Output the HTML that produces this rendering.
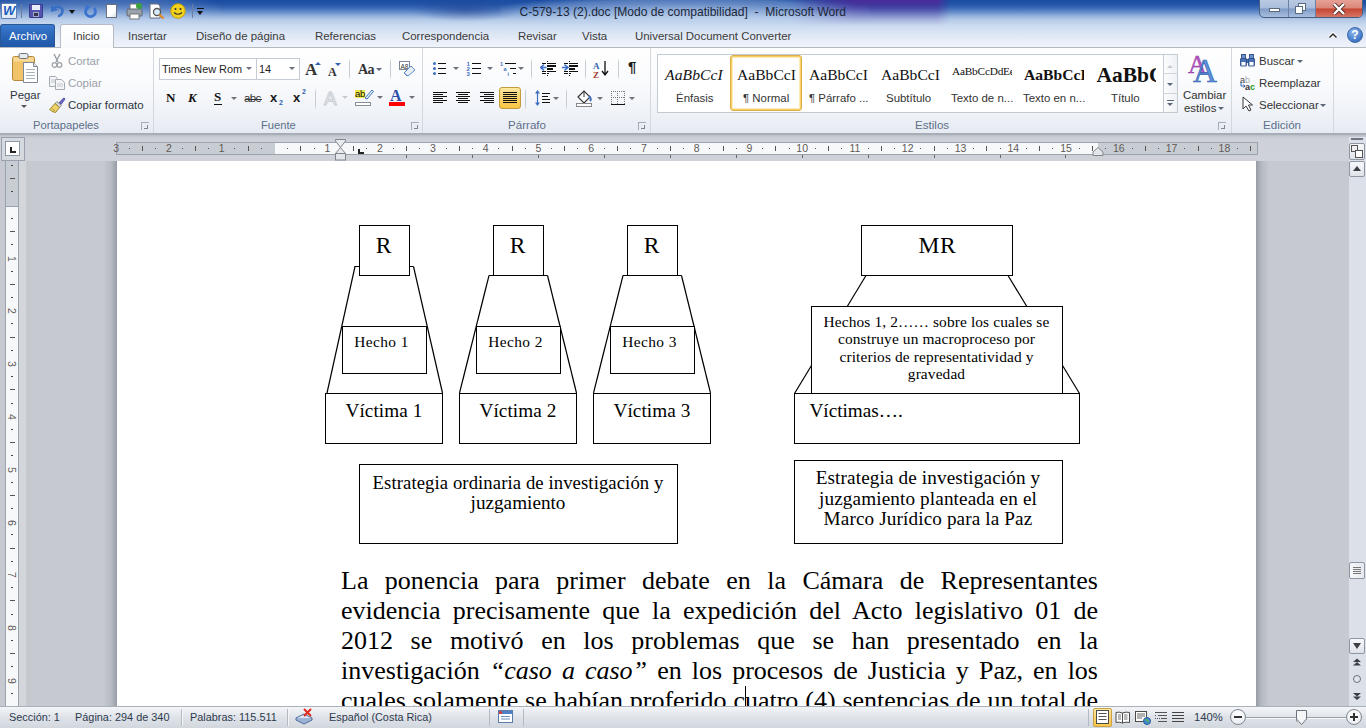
<!DOCTYPE html>
<html><head><meta charset="utf-8">
<style>
*{margin:0;padding:0;box-sizing:border-box}
html,body{width:1366px;height:728px;overflow:hidden;background:#c6c9cf;font-family:"Liberation Sans",sans-serif;font-size:11.45px;color:#1e395b;position:relative}
.a{position:absolute}
.t{position:absolute;white-space:nowrap;line-height:14px}
#title{left:0;top:0;width:1366px;height:47px;background:linear-gradient(#1a4ca2 0px,#2253a6 4px,#3a69b5 8px,#658cc9 12px,#93b1dc 16px,#b5cbe9 20px,#c9d9ef 25px,#d9e4f3 32px,#e7edf8 40px,#eef2fa 46px)}
#ribbon{left:0;top:48px;width:1366px;height:86px;background:linear-gradient(#fefefe 0,#fafbfd 40%,#f0f3f8 75%,#e6ebf2 100%);border-bottom:1px solid #a5adb8}
.sep{position:absolute;width:1px;background:linear-gradient(rgba(200,206,214,0),#c6ccd4 20%,#c6ccd4 80%,rgba(200,206,214,0))}
.gsep{position:absolute;top:48px;height:85px;width:1px;background:#d3d8df}
.glabel{position:absolute;top:118px;white-space:nowrap;color:#5d6f8a;line-height:14px}
.launch{position:absolute;top:122px;width:8px;height:8px;border:1px solid #a3acb8;border-right:none;border-bottom:none}
.dd{position:absolute;width:0;height:0;border-left:3px solid transparent;border-right:3px solid transparent;border-top:3px solid #5b6677}
.serif{font-family:"Liberation Serif",serif;color:#000}
.box{position:absolute;border:1px solid #000;background:#fff}
</style></head><body>
<!-- TITLE BAR + TABS -->
<div id="title" class="a"></div>
<div class="a" style="left:-30px;top:-8px;width:250px;height:36px;background:radial-gradient(ellipse at center,rgba(215,228,245,.3) 0%,rgba(200,218,240,.15) 55%,rgba(200,218,240,0) 75%)"></div>
<div class="a" style="left:410px;top:-2px;width:110px;height:24px;background:radial-gradient(ellipse at center,rgba(25,60,140,.5) 0%,rgba(25,60,140,0) 70%)"></div>
<div class="a" style="left:500px;top:-4px;width:370px;height:30px;background:radial-gradient(ellipse at center,rgba(215,228,245,.55) 0%,rgba(200,218,240,.3) 55%,rgba(200,218,240,0) 75%)"></div>
<div class="a" style="left:790px;top:0;width:160px;height:28px;background:linear-gradient(rgba(85,35,150,.8) 0,rgba(85,35,150,.55) 6px,rgba(85,35,150,.3) 13px,rgba(85,35,150,0) 26px);-webkit-mask-image:linear-gradient(90deg,transparent 0,#000 40%,#000 92%,transparent 100%)"></div>
<div class="t" style="left:519.5px;top:5px;font-size:12.05px;color:#1b2739">C-579-13 (2).doc [Modo de compatibilidad]&nbsp; -&nbsp; Microsoft Word</div>

<!-- window controls -->
<div class="a" style="left:1259px;top:-2px;width:104px;height:20px;border:1px solid #4a5d7a;border-radius:0 0 5px 5px;overflow:hidden;background:linear-gradient(#bccbe3,#a9bddb 50%,#7f9bc6 55%,#a8bedf)"></div>
<div class="a" style="left:1288px;top:0;width:1px;height:17px;background:#6b82a6"></div>
<div class="a" style="left:1315px;top:0;width:1px;height:17px;background:#6b82a6"></div>
<div class="a" style="left:1316px;top:-1px;width:46px;height:18px;border-radius:0 0 4px 0;background:linear-gradient(#e8a49a,#d98677 50%,#c54631 55%,#d77566)"></div>
<div class="a" style="left:1269px;top:8px;width:11px;height:4px;background:#fff;border:1px solid #5a6a80"></div>
<div class="a" style="left:1298px;top:3px;width:8px;height:8px;border:1px solid #5a6a80;background:#f2f4f8;box-shadow:inset 0 0 0 1.5px #fff"></div>
<div class="a" style="left:1295px;top:6px;width:8px;height:8px;border:1px solid #5a6a80;background:#fff;box-shadow:inset 0 0 0 2px #fff"></div>
<svg class="a" style="left:1332px;top:3px" width="14" height="12" viewBox="0 0 14 12"><path d="M2 1 L12 11 M12 1 L2 11" stroke="#4b2a26" stroke-width="4"/><path d="M2 1 L12 11 M12 1 L2 11" stroke="#fff" stroke-width="2.4"/></svg>

<!-- ribbon minimize + help -->
<svg class="a" style="left:1328px;top:31px" width="10" height="8"><path d="M1.5 6.5 L5 3 L8.5 6.5" stroke="#fff" stroke-width="3.5" fill="none"/><path d="M1.5 6.5 L5 3 L8.5 6.5" stroke="#2b2b2b" stroke-width="1.5" fill="none"/></svg>
<div class="a" style="left:1347px;top:27px;width:16px;height:16px;border-radius:50%;background:radial-gradient(circle at 40% 30%,#8fb7ec,#3f77c8 70%,#2f62b0);border:1px solid #3c68a8;color:#fff;font-weight:bold;font-size:12px;line-height:14px;text-align:center">?</div>

<!-- QAT -->
<div class="a" style="left:1px;top:3px;width:16px;height:16px;background:linear-gradient(#fdfdfe,#dfe8f4);border:1px solid #5b7fb3;border-radius:1px"></div>
<div class="t" style="left:3px;top:4px;font-weight:bold;font-size:13px;color:#1d5fbf;font-style:italic;letter-spacing:-1px">W</div>
<div class="a" style="left:21px;top:4px;width:1px;height:14px;background:#6c7f9c"></div>
<div class="a" style="left:29px;top:4px;width:14px;height:14px;background:#5553b0;border-radius:1px;border:1px solid #3b3b8b"></div>
<div class="a" style="left:32px;top:5px;width:8px;height:5px;background:#e8ecf6"></div>
<div class="a" style="left:33px;top:12px;width:6px;height:5px;background:#343450;border:1px solid #9ea6c9"></div>
<svg class="a" style="left:50px;top:4px" width="16" height="14"><path d="M4 4 C9 1 14 4 12 9 C11 11 9 12 8 12" stroke="#3a6fc6" stroke-width="2.6" fill="none"/><path d="M1 1 L1 8 L8 6 Z" fill="#3a6fc6"/></svg>
<div class="dd" style="left:69px;top:10px;border-top-color:#111;border-left-width:3.5px;border-right-width:3.5px;border-top-width:4px"></div>
<svg class="a" style="left:83px;top:4px" width="15" height="15"><path d="M11 4 A5 5 0 1 1 4 4" stroke="#3c74d0" stroke-width="2.8" fill="none"/><path d="M2 1 L8 2 L3 8 Z" fill="#3c74d0"/></svg>
<div class="a" style="left:106px;top:4px;width:11px;height:14px;background:linear-gradient(135deg,#fff 60%,#d8dde6);border:1px solid #6a7080"></div>
<svg class="a" style="left:126px;top:3px" width="17" height="17"><rect x="4" y="1" width="9" height="6" fill="#fff" stroke="#777"/><rect x="1" y="6" width="15" height="7" rx="1" fill="#9aa2ac" stroke="#5f6670"/><rect x="4" y="11" width="9" height="5" fill="#fff" stroke="#777"/><circle cx="13" cy="3" r="3" fill="#3aa03a"/></svg>
<svg class="a" style="left:148px;top:3px" width="17" height="17"><path d="M2 1 H10 L12 3 V15 H2 Z" fill="#fff" stroke="#6a7080"/><circle cx="9" cy="9" r="3.5" fill="#d9ecff" stroke="#555" stroke-width="1.3"/><path d="M11.5 11.5 L15.5 15.5" stroke="#e08a2a" stroke-width="2.2"/></svg>
<svg class="a" style="left:170px;top:3px" width="16" height="16"><circle cx="8" cy="8" r="7.2" fill="#f3d21b" stroke="#c9a300"/><circle cx="5.5" cy="6" r="1" fill="#333"/><circle cx="10.5" cy="6" r="1" fill="#333"/><path d="M4 9.5 Q8 13 12 9.5" stroke="#333" stroke-width="1.2" fill="none"/></svg>
<div class="a" style="left:192px;top:4px;width:1px;height:14px;background:#6c7f9c"></div>
<div class="a" style="left:197px;top:8px;width:7px;height:1px;background:#111"></div>
<div class="dd" style="left:197px;top:11px;border-top-color:#111;border-left-width:3.5px;border-right-width:3.5px;border-top-width:4px"></div>

<!-- tabs -->
<div class="a" style="left:0;top:24px;width:55px;height:23px;border-radius:3px 3px 0 0;background:linear-gradient(#3b7bd0,#2a65b8 50%,#1f58a8);border:1px solid #2b5796;border-bottom:none"></div>
<div class="t" style="left:9px;top:29px;color:#fff">Archivo</div>
<div class="a" style="left:60px;top:24px;width:54px;height:25px;border-radius:3px 3px 0 0;background:linear-gradient(#ffffff,#f8fafc);border:1px solid #b6bcc6;border-bottom:none"></div>
<div class="a" style="left:0;top:47px;width:61px;height:1px;background:#b4b9c0"></div>
<div class="a" style="left:113px;top:47px;width:1253px;height:1px;background:#b4b9c0"></div>
<div class="t" style="left:73px;top:29px;color:#3b3b3b">Inicio</div>
<div class="t" style="left:128px;top:29px;color:#3b3b3b">Insertar</div>
<div class="t" style="left:196px;top:29px;color:#3b3b3b">Diseño de página</div>
<div class="t" style="left:315px;top:29px;color:#3b3b3b">Referencias</div>
<div class="t" style="left:402px;top:29px;color:#3b3b3b">Correspondencia</div>
<div class="t" style="left:518px;top:29px;color:#3b3b3b">Revisar</div>
<div class="t" style="left:582px;top:29px;color:#3b3b3b">Vista</div>
<div class="t" style="left:635px;top:29px;color:#3b3b3b">Universal Document Converter</div>

<!-- RIBBON -->
<div id="ribbon" class="a"></div>
<!--RIBBON_START-->
<!-- Portapapeles -->
<svg class="a" style="left:11px;top:52px" width="28" height="32" viewBox="0 0 28 32">
<rect x="1.5" y="4.5" width="22" height="24" rx="2" fill="#f1c46a" stroke="#b7873a"/>
<rect x="2.5" y="5.5" width="20" height="4" fill="#f7d995"/>
<rect x="8" y="1.5" width="9" height="5" rx="1.5" fill="#e9ecef" stroke="#6c737d"/>
<path d="M12.5 10.5 H22.5 L26.5 14.5 V30.5 H12.5 Z" fill="#fff" stroke="#7f8896"/>
<path d="M22.5 10.5 V14.5 H26.5" fill="#dfe5ec" stroke="#7f8896"/>
<path d="M15 17.5 H24 M15 20.5 H24 M15 23.5 H24 M15 26.5 H24" stroke="#a8b3c2"/>
</svg>
<div class="t" style="left:10px;top:88px;color:#2d3540">Pegar</div>
<div class="dd" style="left:21px;top:105px;border-top-color:#555"></div>
<svg class="a" style="left:51px;top:54px" width="12" height="14" viewBox="0 0 12 14"><path d="M3 0 L7 8 M9 0 L5 8" stroke="#9ea3aa" stroke-width="1.5"/><circle cx="3.5" cy="11" r="2.3" fill="none" stroke="#9ea3aa" stroke-width="1.3"/><circle cx="8.5" cy="11" r="2.3" fill="none" stroke="#9ea3aa" stroke-width="1.3"/></svg>
<div class="t" style="left:68px;top:54px;color:#9aa0a8">Cortar</div>
<svg class="a" style="left:49px;top:76px" width="16" height="14" viewBox="0 0 16 14"><path d="M0.5 0.5 H6.5 L8.5 2.5 V10.5 H0.5 Z" fill="#f4f5f7" stroke="#a5aab2"/><path d="M6.5 3.5 H12.5 L15.5 6.5 V13.5 H6.5 Z" fill="#f4f5f7" stroke="#a5aab2"/><path d="M2 4 H6 M2 6 H6 M8 8 H14 M8 10 H14" stroke="#c1c5cb"/></svg>
<div class="t" style="left:68px;top:76px;color:#9aa0a8">Copiar</div>
<svg class="a" style="left:49px;top:97px" width="17" height="16" viewBox="0 0 17 16"><path d="M10 6 L14 1.5 Q15.5 0.5 16 2 L12 7.5 Z" fill="#6d6dd0" stroke="#3f3f8f" stroke-width="0.8"/><path d="M8 4.5 L12.5 8.5 L10.5 10.5 L6 6.5 Z" fill="#d8d8d8" stroke="#777" stroke-width="0.8"/><path d="M6 6.5 L10.5 10.5 L6.5 15.5 Q3 15 0.5 12.5 Z" fill="#eed36a" stroke="#8f7a2a" stroke-width="0.9"/><path d="M3 11.5 L6 14" stroke="#b39a3a"/></svg>
<div class="t" style="left:68px;top:98px;color:#2d3540">Copiar formato</div>
<div class="glabel" style="left:33px;font-size:11.2px">Portapapeles</div>
<div class="launch" style="left:141px"></div><div class="a" style="left:144px;top:125px;width:4px;height:4px;border-right:1px solid #7c8796;border-bottom:1px solid #7c8796"></div>
<div class="gsep" style="left:153px"></div>

<!-- Fuente -->
<div class="a" style="left:159px;top:58px;width:98px;height:22px;border:1px solid #c6ccd5;background:#fff"></div>
<div class="a" style="left:256px;top:58px;width:44px;height:22px;border:1px solid #c6ccd5;background:#fff"></div>
<div class="t" style="left:162px;top:62px;color:#1e1e1e;font-size:10.9px">Times New Rom</div>
<div class="dd" style="left:246px;top:67px;border-top-color:#6d737c"></div>
<div class="t" style="left:259px;top:62px;color:#1e1e1e;font-size:10.9px">14</div>
<div class="dd" style="left:289px;top:67px;border-top-color:#6d737c"></div>
<div class="t serif" style="left:305px;top:63px;font-size:17px;font-weight:bold;color:#333">A</div>
<div class="a" style="left:315px;top:62px;width:0;height:0;border-left:3px solid transparent;border-right:3px solid transparent;border-bottom:3px solid #2f63ad"></div>
<div class="t serif" style="left:328px;top:65px;font-size:12px;font-weight:bold;color:#333">A</div>
<div class="dd" style="left:335px;top:63px;border-top-color:#2f63ad"></div>
<div class="sep" style="left:349px;top:58px;height:22px"></div>
<div class="t serif" style="left:358px;top:63px;font-size:14px;font-weight:bold;color:#333;letter-spacing:-0.5px">Aa</div>
<div class="dd" style="left:376px;top:68px"></div>
<div class="sep" style="left:390px;top:58px;height:22px"></div>
<svg class="a" style="left:398px;top:60px" width="18" height="17" viewBox="0 0 18 17"><rect x="1.5" y="1.5" width="10" height="8" fill="#fff" stroke="#7b8796"/><text x="2.5" y="8.5" font-size="6.5" font-family="Liberation Sans" fill="#333">A8</text><path d="M6 13 L13 6 L17 10 L10 16 Z" fill="#e8eef6" stroke="#5b8ac6"/><path d="M6 13 L9 16" stroke="#5b8ac6"/></svg>

<div class="t serif" style="left:166px;top:91px;font-size:13px;font-weight:bold;color:#111">N</div>
<div class="t serif" style="left:188px;top:91px;font-size:13px;font-weight:bold;font-style:italic;color:#111">K</div>
<div class="t serif" style="left:214px;top:90px;font-size:13px;font-weight:bold;color:#111">S</div>
<div class="a" style="left:214px;top:104px;width:8px;height:1px;background:#111"></div>
<div class="dd" style="left:231px;top:97px;border-top-color:#6d737c"></div>
<div class="t" style="left:244px;top:91px;font-size:11.5px;color:#333;letter-spacing:-0.6px">abc</div>
<div class="a" style="left:245px;top:99px;width:17px;height:1px;background:#333"></div>
<div class="t" style="left:270px;top:91px;font-size:13px;font-weight:bold;color:#1a1a1a">x</div>
<div class="t" style="left:279px;top:96px;font-size:7px;font-weight:bold;color:#2f63ad">2</div>
<div class="t" style="left:293px;top:91px;font-size:13px;font-weight:bold;color:#1a1a1a">x</div>
<div class="t" style="left:302px;top:85px;font-size:7px;font-weight:bold;color:#2f63ad">2</div>
<div class="sep" style="left:315px;top:88px;height:22px"></div>
<div class="t" style="left:324px;top:91px;font-size:19px;line-height:16px;color:#e9ebee;-webkit-text-stroke:0.8px #c9cdd3;text-shadow:0 0 2px #d5d9de">A</div>
<div class="dd" style="left:342px;top:96px;border-top-color:#c6cad0"></div>
<div class="a" style="left:355px;top:90px;width:10px;height:8px;background:#f2ea4a"></div>
<div class="t" style="left:355px;top:86.5px;font-size:9.5px;color:#111;letter-spacing:-0.3px">ab</div>
<svg class="a" style="left:364px;top:88px" width="10" height="12"><path d="M1 10 L8 2 L9.5 3.5 L3 11 Z" fill="#e6eef8" stroke="#3d6fb7"/></svg>
<div class="a" style="left:355px;top:102px;width:16px;height:4px;border:1px solid #8a8f96;background:#fff"></div>
<div class="dd" style="left:377px;top:96px;border-top-color:#6d737c"></div>
<div class="t serif" style="left:390px;top:89px;font-size:16px;font-weight:bold;color:#2b4ea8">A</div>
<div class="a" style="left:389px;top:102px;width:16px;height:4px;background:#ff0000"></div>
<div class="dd" style="left:409px;top:96px;border-top-color:#6d737c"></div>
<div class="glabel" style="left:261px;font-size:11.2px">Fuente</div>
<div class="launch" style="left:411px"></div><div class="a" style="left:414px;top:125px;width:4px;height:4px;border-right:1px solid #7c8796;border-bottom:1px solid #7c8796"></div>
<div class="gsep" style="left:422px"></div>

<!-- Parrafo -->
<svg class="a" style="left:432px;top:61px" width="16" height="15" shape-rendering="crispEdges"><g fill="#3d6fc0"><rect x="1" y="1" width="3" height="3" rx="1.5" shape-rendering="auto"/><rect x="1" y="6" width="3" height="3" rx="1.5" shape-rendering="auto"/><rect x="1" y="11" width="3" height="3" rx="1.5" shape-rendering="auto"/></g><g fill="#111"><rect x="6" y="2" width="8" height="1"/><rect x="6" y="7" width="8" height="1"/><rect x="6" y="12" width="8" height="1"/></g></svg>
<div class="dd" style="left:453px;top:67px;border-top-color:#6d737c"></div>
<svg class="a" style="left:466px;top:60px" width="17" height="16"><g fill="#3d6fc0" font-size="6" font-family="Liberation Sans" font-weight="bold"><text x="0.5" y="6">1</text><text x="0.5" y="11">2</text><text x="0.5" y="16">3</text></g><g fill="#111" shape-rendering="crispEdges"><rect x="6" y="3" width="9" height="1"/><rect x="6" y="8" width="9" height="1"/><rect x="6" y="13" width="9" height="1"/></g></svg>
<div class="dd" style="left:487px;top:67px;border-top-color:#6d737c"></div>
<svg class="a" style="left:499px;top:60px" width="18" height="17"><g fill="#3d6fc0" font-size="5.5" font-family="Liberation Sans" font-weight="bold"><text x="1" y="6">1</text><text x="4.5" y="11">a</text><text x="8.5" y="16">i</text></g><g fill="#111" shape-rendering="crispEdges"><rect x="6" y="3" width="11" height="1"/><rect x="11" y="8" width="6" height="1"/><rect x="14" y="13" width="3" height="1"/></g></svg>
<div class="dd" style="left:518px;top:67px;border-top-color:#6d737c"></div>
<div class="sep" style="left:531px;top:58px;height:22px"></div>
<svg class="a" style="left:540px;top:60px" width="17" height="17"><g fill="#111" shape-rendering="crispEdges"><rect x="7" y="1" width="1" height="1"/><rect x="7" y="15" width="1" height="1"/><rect x="2" y="3" width="4" height="1"/><rect x="7" y="3" width="9" height="1"/><rect x="7" y="5" width="9" height="2"/><rect x="7" y="8" width="6" height="2"/><rect x="2" y="11" width="4" height="1"/><rect x="7" y="11" width="9" height="1"/><rect x="2" y="13" width="4" height="1"/><rect x="7" y="13" width="2" height="1"/></g><path d="M6 7.5 H1.5 M3.5 5 L0.5 7.5 L3.5 10" stroke="#3a6fc8" stroke-width="1.6" fill="none" stroke-linecap="round"/></svg>
<svg class="a" style="left:562px;top:60px" width="17" height="17"><g fill="#111" shape-rendering="crispEdges"><rect x="7" y="1" width="1" height="1"/><rect x="7" y="15" width="1" height="1"/><rect x="2" y="3" width="4" height="1"/><rect x="7" y="3" width="9" height="1"/><rect x="7" y="5" width="9" height="2"/><rect x="7" y="8" width="6" height="2"/><rect x="2" y="11" width="4" height="1"/><rect x="7" y="11" width="9" height="1"/><rect x="2" y="13" width="4" height="1"/><rect x="7" y="13" width="2" height="1"/></g><path d="M0.5 7.5 H5 M3 5 L6 7.5 L3 10" stroke="#3a6fc8" stroke-width="1.6" fill="none" stroke-linecap="round"/></svg>
<div class="sep" style="left:585px;top:58px;height:22px"></div>
<div class="t serif" style="left:593px;top:59px;font-size:9px;font-weight:bold;color:#2f63ad">A</div>
<div class="t serif" style="left:593px;top:68px;font-size:9px;font-weight:bold;color:#a13a2a">Z</div>
<svg class="a" style="left:601px;top:60px" width="8" height="17"><path d="M4 1 V14 M1 11 L4 15 L7 11" stroke="#111" stroke-width="1.3" fill="none"/></svg>
<div class="sep" style="left:618px;top:58px;height:22px"></div>
<div class="t" style="left:628px;top:60px;font-size:15px;font-weight:bold;color:#1a1a1a">¶</div>

<svg class="a" style="left:433px;top:92px" width="15" height="12" shape-rendering="crispEdges"><g fill="#111"><rect x="0" y="0" width="14" height="1"/><rect x="0" y="2" width="10" height="1"/><rect x="0" y="4" width="14" height="1"/><rect x="0" y="6" width="10" height="1"/><rect x="0" y="8" width="14" height="1"/><rect x="0" y="10" width="10" height="1"/></g></svg>
<svg class="a" style="left:456px;top:92px" width="15" height="12" shape-rendering="crispEdges"><g fill="#111"><rect x="0" y="0" width="14" height="1"/><rect x="2" y="2" width="10" height="1"/><rect x="0" y="4" width="14" height="1"/><rect x="2" y="6" width="10" height="1"/><rect x="0" y="8" width="14" height="1"/><rect x="2" y="10" width="10" height="1"/></g></svg>
<svg class="a" style="left:480px;top:92px" width="15" height="12" shape-rendering="crispEdges"><g fill="#111"><rect x="0" y="0" width="14" height="1"/><rect x="4" y="2" width="10" height="1"/><rect x="0" y="4" width="14" height="1"/><rect x="4" y="6" width="10" height="1"/><rect x="0" y="8" width="14" height="1"/><rect x="4" y="10" width="10" height="1"/></g></svg>
<div class="a" style="left:499px;top:87px;width:22px;height:22px;border:1px solid #c29b3a;border-radius:3px;background:linear-gradient(#fde9a1,#fcd46c 50%,#f9c544)"></div>
<svg class="a" style="left:503px;top:92px" width="15" height="12" shape-rendering="crispEdges"><g fill="#111"><rect x="0" y="0" width="14" height="1"/><rect x="0" y="2" width="14" height="1"/><rect x="0" y="4" width="14" height="1"/><rect x="0" y="6" width="14" height="1"/><rect x="0" y="8" width="14" height="1"/><rect x="0" y="10" width="14" height="1"/></g></svg>
<div class="sep" style="left:525px;top:88px;height:22px"></div>
<svg class="a" style="left:535px;top:89px" width="18" height="18"><path d="M2.5 2 V16" stroke="#3d6fc0" stroke-width="1.2"/><path d="M0 4.5 L2.5 1 L5 4.5 Z M0 13.5 L2.5 17 L5 13.5 Z" fill="#3d6fc0"/><g fill="#111" shape-rendering="crispEdges"><rect x="7" y="4" width="8" height="1"/><rect x="7" y="7" width="6" height="1"/><rect x="7" y="10" width="8" height="1"/><rect x="7" y="13" width="8" height="1"/></g></svg>
<div class="dd" style="left:553px;top:97px;border-top-color:#6d737c"></div>
<div class="sep" style="left:566px;top:88px;height:22px"></div>
<svg class="a" style="left:575px;top:89px" width="18" height="18"><path d="M3 8 L9 2 L15 8 L9 14 Z" fill="#fff" stroke="#333" stroke-width="1.1"/><path d="M14 7 Q17 10 15 12" stroke="#3d6fc0" stroke-width="2" fill="none"/><path d="M9 2 V8" stroke="#333"/><rect x="1.5" y="14.5" width="15" height="3" fill="#fff" stroke="#888"/></svg>
<div class="dd" style="left:597px;top:97px;border-top-color:#6d737c"></div>
<svg class="a" style="left:610px;top:90px" width="16" height="16" shape-rendering="crispEdges"><g fill="#777"><rect x="1" y="1" width="1" height="1"/><rect x="1" y="7" width="1" height="1"/><rect x="1" y="1" width="1" height="1"/><rect x="14" y="1" width="1" height="1"/><rect x="7" y="1" width="1" height="1"/><rect x="3" y="1" width="1" height="1"/><rect x="3" y="7" width="1" height="1"/><rect x="1" y="3" width="1" height="1"/><rect x="14" y="3" width="1" height="1"/><rect x="7" y="3" width="1" height="1"/><rect x="5" y="1" width="1" height="1"/><rect x="5" y="7" width="1" height="1"/><rect x="1" y="5" width="1" height="1"/><rect x="14" y="5" width="1" height="1"/><rect x="7" y="5" width="1" height="1"/><rect x="7" y="1" width="1" height="1"/><rect x="7" y="7" width="1" height="1"/><rect x="1" y="7" width="1" height="1"/><rect x="14" y="7" width="1" height="1"/><rect x="7" y="7" width="1" height="1"/><rect x="9" y="1" width="1" height="1"/><rect x="9" y="7" width="1" height="1"/><rect x="1" y="9" width="1" height="1"/><rect x="14" y="9" width="1" height="1"/><rect x="7" y="9" width="1" height="1"/><rect x="11" y="1" width="1" height="1"/><rect x="11" y="7" width="1" height="1"/><rect x="1" y="11" width="1" height="1"/><rect x="14" y="11" width="1" height="1"/><rect x="7" y="11" width="1" height="1"/><rect x="13" y="1" width="1" height="1"/><rect x="13" y="7" width="1" height="1"/><rect x="1" y="13" width="1" height="1"/><rect x="14" y="13" width="1" height="1"/><rect x="7" y="13" width="1" height="1"/></g><rect x="1" y="14" width="14" height="1" fill="#111"/></svg>
<div class="dd" style="left:629px;top:97px;border-top-color:#6d737c"></div>
<div class="glabel" style="left:508px;font-size:11.6px">Párrafo</div>
<div class="launch" style="left:638px"></div><div class="a" style="left:641px;top:125px;width:4px;height:4px;border-right:1px solid #7c8796;border-bottom:1px solid #7c8796"></div>
<div class="gsep" style="left:650px"></div>

<!-- Estilos -->
<div class="a" style="left:657px;top:54px;width:521px;height:59px;border:1px solid #c5cbd3;background:#fff"></div>
<div class="a" style="left:730px;top:55px;width:72px;height:56px;border:1px solid #dfae48;border-radius:3px;box-shadow:inset 0 0 0 1px #f7cf68,inset 0 0 0 2px #fdebb4"></div>
<div class="t serif" style="left:665px;top:67.7px;font-size:15.6px;font-style:italic;color:#111;letter-spacing:0.1px">AaBbCcI</div>
<div class="t" style="left:676px;top:91px;color:#333">Énfasis</div>
<div class="t serif" style="left:737px;top:67.7px;font-size:15.6px;color:#111;letter-spacing:0px">AaBbCcI</div>
<div class="t" style="left:743px;top:91px;color:#333">¶ Normal</div>
<div class="t serif" style="left:809px;top:67.7px;font-size:15.6px;color:#111;letter-spacing:0px">AaBbCcI</div>
<div class="t" style="left:809px;top:91px;color:#333">¶ Párrafo ...</div>
<div class="t serif" style="left:881px;top:67.7px;font-size:15.6px;color:#111;letter-spacing:0px">AaBbCcI</div>
<div class="t" style="left:886px;top:91px;color:#333">Subtítulo</div>
<div class="a" style="left:952px;top:60px;width:60px;height:18px;overflow:hidden"><div class="t serif" style="left:0;top:3.8px;font-size:11.3px;color:#111;letter-spacing:-0.2px">AaBbCcDdEe</div></div>
<div class="t" style="left:951px;top:91px;color:#333">Texto de n...</div>
<div class="a" style="left:1024px;top:62px;width:60px;height:22px;overflow:hidden"><div class="t serif" style="left:0;top:6px;font-size:15.6px;font-weight:bold;color:#111">AaBbCcI</div></div>
<div class="t" style="left:1023px;top:91px;color:#333">Texto en n...</div>
<div class="a" style="left:1096px;top:60px;width:60px;height:28px;overflow:hidden"><div class="t serif" style="left:0.5px;top:3.6px;font-size:21.5px;font-weight:bold;color:#111;line-height:22px">AaBbCc</div></div>
<div class="t" style="left:1111px;top:91px;color:#333">Título</div>
<div class="a" style="left:1163px;top:54px;width:15px;height:59px;border:1px solid #c5cbd3;background:linear-gradient(90deg,#fbfcfd,#eef1f5)"></div>
<div class="a" style="left:1163px;top:73px;width:15px;height:1px;background:#d0d5dc"></div>
<div class="a" style="left:1163px;top:93px;width:15px;height:1px;background:#d0d5dc"></div>
<div class="a" style="left:1167px;top:65px;width:0;height:0;border-left:3px solid transparent;border-right:3px solid transparent;border-bottom:3px solid #c5cad1"></div>
<div class="dd" style="left:1167px;top:83px"></div>
<div class="a" style="left:1167px;top:100px;width:7px;height:1px;background:#5b6677"></div>
<div class="dd" style="left:1167px;top:103px"></div>
<svg class="a" style="left:1184px;top:50px" width="40" height="36" viewBox="0 0 40 36"><text x="4" y="23" font-family="Liberation Serif" font-size="26" fill="#b552c4" stroke="#8d3aa0" stroke-width="0.4">A</text><text x="9" y="32" font-family="Liberation Serif" font-size="33" fill="#5c8fd6" stroke="#2f62b0" stroke-width="0.6">A</text></svg>
<div class="t" style="left:1183px;top:88px;color:#333">Cambiar</div>
<div class="t" style="left:1184px;top:101px;color:#333">estilos</div>
<div class="dd" style="left:1218px;top:107px"></div>
<div class="glabel" style="left:915px;font-size:11.6px">Estilos</div>
<div class="launch" style="left:1218px"></div><div class="a" style="left:1221px;top:125px;width:4px;height:4px;border-right:1px solid #7c8796;border-bottom:1px solid #7c8796"></div>
<div class="gsep" style="left:1231px"></div>

<!-- Edicion -->
<svg class="a" style="left:1240px;top:53px" width="16" height="14" viewBox="0 0 16 14"><g stroke="#2d4f8a" stroke-width="0.9"><rect x="1.5" y="1.5" width="4" height="4" fill="#6f92c8"/><rect x="9.5" y="1.5" width="4" height="4" fill="#6f92c8"/><rect x="0.5" y="5.5" width="6" height="7.5" rx="0.5" fill="#4a72b5"/><rect x="8.5" y="5.5" width="6" height="7.5" rx="0.5" fill="#4a72b5"/><rect x="6.5" y="6.5" width="2" height="3" fill="#4a72b5"/></g><rect x="1.5" y="9" width="4" height="3.5" fill="#fff"/><rect x="9.5" y="9" width="4" height="3.5" fill="#fff"/></svg>
<div class="t" style="left:1259px;top:54px;color:#333">Buscar</div>
<div class="dd" style="left:1297px;top:60px"></div>
<div class="t" style="left:1240px;top:73px;font-size:9px;color:#444">a<span style="color:#aaa">b</span></div><svg class="a" style="left:1240px;top:82px" width="6" height="6"><path d="M1 0 V4 H5 M3.5 2.5 L5 4 L3.5 5.5" stroke="#2f63ad" fill="none"/></svg>
<div class="t" style="left:1245px;top:80px;font-size:9px;font-weight:bold;color:#333">a<span style="color:#2a9a2a">c</span></div>
<div class="t" style="left:1259px;top:76px;color:#333">Reemplazar</div>
<svg class="a" style="left:1242px;top:96px" width="12" height="16"><path d="M1 1 V13 L4 10 L7 15 L9 14 L6.5 9 H10.5 Z" fill="#fff" stroke="#3a3a3a"/></svg>
<div class="t" style="left:1259px;top:98px;color:#333">Seleccionar</div>
<div class="dd" style="left:1320px;top:104px"></div>
<div class="glabel" style="left:1263px;font-size:11.6px">Edición</div>
<div class="gsep" style="left:1333px"></div>
<!--RIBBON_END-->

<!-- RULER STRIP -->
<div class="a" style="left:0;top:134px;width:1366px;height:27px;background:linear-gradient(#9aa0a8 0,#b9bec5 1px,#c9cdd3 3px,#ced2d8 5px,#cfd3d9 100%)"></div>


<!-- DOC AREA -->
<div class="a" style="left:0;top:161px;width:1349px;height:545px;background:#c6c9cf"></div>
<!--RULER_START-->
<div class="a" style="left:1px;top:137px;width:24px;height:24px;border:1px solid #98a1ad;background:#d5dae0"></div>
<div class="a" style="left:5px;top:141px;width:15px;height:15px;border:1px solid #8f98a4;background:#fff"></div>
<div class="a" style="left:10px;top:147px;width:2px;height:6px;background:#222"></div><div class="a" style="left:10px;top:151px;width:6px;height:2px;background:#222"></div>
<div class="a" style="left:116px;top:142px;width:1142px;height:13px;border:1px solid #9aa3ae;background:#c8cdd4"></div>
<div class="a" style="left:275px;top:143px;width:823px;height:11px;background:#f7f8fa"></div>
<div class="t" style="left:106.2px;top:142px;width:20px;text-align:center;font-size:10.5px;line-height:13px;color:#5f5a57">3</div>
<div class="a" style="left:128.9px;top:148px;width:1px;height:1px;background:#555"></div>
<div class="a" style="left:142.1px;top:146px;width:1px;height:5px;background:#555"></div>
<div class="a" style="left:155.3px;top:148px;width:1px;height:1px;background:#555"></div>
<div class="t" style="left:159.0px;top:142px;width:20px;text-align:center;font-size:10.5px;line-height:13px;color:#5f5a57">2</div>
<div class="a" style="left:181.7px;top:148px;width:1px;height:1px;background:#555"></div>
<div class="a" style="left:194.8px;top:146px;width:1px;height:5px;background:#555"></div>
<div class="a" style="left:208.0px;top:148px;width:1px;height:1px;background:#555"></div>
<div class="t" style="left:211.7px;top:142px;width:20px;text-align:center;font-size:10.5px;line-height:13px;color:#5f5a57">1</div>
<div class="a" style="left:234.4px;top:148px;width:1px;height:1px;background:#555"></div>
<div class="a" style="left:247.6px;top:146px;width:1px;height:5px;background:#555"></div>
<div class="a" style="left:260.8px;top:148px;width:1px;height:1px;background:#555"></div>
<div class="a" style="left:287.2px;top:148px;width:1px;height:1px;background:#555"></div>
<div class="a" style="left:300.4px;top:146px;width:1px;height:5px;background:#555"></div>
<div class="a" style="left:313.6px;top:148px;width:1px;height:1px;background:#555"></div>
<div class="t" style="left:317.3px;top:142px;width:20px;text-align:center;font-size:10.5px;line-height:13px;color:#5f5a57">1</div>
<div class="a" style="left:340.0px;top:148px;width:1px;height:1px;background:#555"></div>
<div class="a" style="left:353.2px;top:146px;width:1px;height:5px;background:#555"></div>
<div class="a" style="left:366.3px;top:148px;width:1px;height:1px;background:#555"></div>
<div class="t" style="left:370.0px;top:142px;width:20px;text-align:center;font-size:10.5px;line-height:13px;color:#5f5a57">2</div>
<div class="a" style="left:392.7px;top:148px;width:1px;height:1px;background:#555"></div>
<div class="a" style="left:405.9px;top:146px;width:1px;height:5px;background:#555"></div>
<div class="a" style="left:419.1px;top:148px;width:1px;height:1px;background:#555"></div>
<div class="t" style="left:422.8px;top:142px;width:20px;text-align:center;font-size:10.5px;line-height:13px;color:#5f5a57">3</div>
<div class="a" style="left:445.5px;top:148px;width:1px;height:1px;background:#555"></div>
<div class="a" style="left:458.7px;top:146px;width:1px;height:5px;background:#555"></div>
<div class="a" style="left:471.9px;top:148px;width:1px;height:1px;background:#555"></div>
<div class="t" style="left:475.6px;top:142px;width:20px;text-align:center;font-size:10.5px;line-height:13px;color:#5f5a57">4</div>
<div class="a" style="left:498.3px;top:148px;width:1px;height:1px;background:#555"></div>
<div class="a" style="left:511.5px;top:146px;width:1px;height:5px;background:#555"></div>
<div class="a" style="left:524.7px;top:148px;width:1px;height:1px;background:#555"></div>
<div class="t" style="left:528.4px;top:142px;width:20px;text-align:center;font-size:10.5px;line-height:13px;color:#5f5a57">5</div>
<div class="a" style="left:551.0px;top:148px;width:1px;height:1px;background:#555"></div>
<div class="a" style="left:564.2px;top:146px;width:1px;height:5px;background:#555"></div>
<div class="a" style="left:577.4px;top:148px;width:1px;height:1px;background:#555"></div>
<div class="t" style="left:581.1px;top:142px;width:20px;text-align:center;font-size:10.5px;line-height:13px;color:#5f5a57">6</div>
<div class="a" style="left:603.8px;top:148px;width:1px;height:1px;background:#555"></div>
<div class="a" style="left:617.0px;top:146px;width:1px;height:5px;background:#555"></div>
<div class="a" style="left:630.2px;top:148px;width:1px;height:1px;background:#555"></div>
<div class="t" style="left:633.9px;top:142px;width:20px;text-align:center;font-size:10.5px;line-height:13px;color:#5f5a57">7</div>
<div class="a" style="left:656.6px;top:148px;width:1px;height:1px;background:#555"></div>
<div class="a" style="left:669.8px;top:146px;width:1px;height:5px;background:#555"></div>
<div class="a" style="left:683.0px;top:148px;width:1px;height:1px;background:#555"></div>
<div class="t" style="left:686.7px;top:142px;width:20px;text-align:center;font-size:10.5px;line-height:13px;color:#5f5a57">8</div>
<div class="a" style="left:709.4px;top:148px;width:1px;height:1px;background:#555"></div>
<div class="a" style="left:722.5px;top:146px;width:1px;height:5px;background:#555"></div>
<div class="a" style="left:735.7px;top:148px;width:1px;height:1px;background:#555"></div>
<div class="t" style="left:739.4px;top:142px;width:20px;text-align:center;font-size:10.5px;line-height:13px;color:#5f5a57">9</div>
<div class="a" style="left:762.1px;top:148px;width:1px;height:1px;background:#555"></div>
<div class="a" style="left:775.3px;top:146px;width:1px;height:5px;background:#555"></div>
<div class="a" style="left:788.5px;top:148px;width:1px;height:1px;background:#555"></div>
<div class="t" style="left:792.2px;top:142px;width:20px;text-align:center;font-size:10.5px;line-height:13px;color:#5f5a57">10</div>
<div class="a" style="left:814.9px;top:148px;width:1px;height:1px;background:#555"></div>
<div class="a" style="left:828.1px;top:146px;width:1px;height:5px;background:#555"></div>
<div class="a" style="left:841.3px;top:148px;width:1px;height:1px;background:#555"></div>
<div class="t" style="left:845.0px;top:142px;width:20px;text-align:center;font-size:10.5px;line-height:13px;color:#5f5a57">11</div>
<div class="a" style="left:867.7px;top:148px;width:1px;height:1px;background:#555"></div>
<div class="a" style="left:880.9px;top:146px;width:1px;height:5px;background:#555"></div>
<div class="a" style="left:894.0px;top:148px;width:1px;height:1px;background:#555"></div>
<div class="t" style="left:897.7px;top:142px;width:20px;text-align:center;font-size:10.5px;line-height:13px;color:#5f5a57">12</div>
<div class="a" style="left:920.4px;top:148px;width:1px;height:1px;background:#555"></div>
<div class="a" style="left:933.6px;top:146px;width:1px;height:5px;background:#555"></div>
<div class="a" style="left:946.8px;top:148px;width:1px;height:1px;background:#555"></div>
<div class="t" style="left:950.5px;top:142px;width:20px;text-align:center;font-size:10.5px;line-height:13px;color:#5f5a57">13</div>
<div class="a" style="left:973.2px;top:148px;width:1px;height:1px;background:#555"></div>
<div class="a" style="left:986.4px;top:146px;width:1px;height:5px;background:#555"></div>
<div class="a" style="left:999.6px;top:148px;width:1px;height:1px;background:#555"></div>
<div class="t" style="left:1003.3px;top:142px;width:20px;text-align:center;font-size:10.5px;line-height:13px;color:#5f5a57">14</div>
<div class="a" style="left:1026.0px;top:148px;width:1px;height:1px;background:#555"></div>
<div class="a" style="left:1039.2px;top:146px;width:1px;height:5px;background:#555"></div>
<div class="a" style="left:1052.4px;top:148px;width:1px;height:1px;background:#555"></div>
<div class="t" style="left:1056.1px;top:142px;width:20px;text-align:center;font-size:10.5px;line-height:13px;color:#5f5a57">15</div>
<div class="a" style="left:1078.7px;top:148px;width:1px;height:1px;background:#555"></div>
<div class="a" style="left:1091.9px;top:146px;width:1px;height:5px;background:#555"></div>
<div class="a" style="left:1105.1px;top:148px;width:1px;height:1px;background:#555"></div>
<div class="t" style="left:1108.8px;top:142px;width:20px;text-align:center;font-size:10.5px;line-height:13px;color:#5f5a57">16</div>
<div class="a" style="left:1131.5px;top:148px;width:1px;height:1px;background:#555"></div>
<div class="a" style="left:1144.7px;top:146px;width:1px;height:5px;background:#555"></div>
<div class="a" style="left:1157.9px;top:148px;width:1px;height:1px;background:#555"></div>
<div class="t" style="left:1161.6px;top:142px;width:20px;text-align:center;font-size:10.5px;line-height:13px;color:#5f5a57">17</div>
<div class="a" style="left:1184.3px;top:148px;width:1px;height:1px;background:#555"></div>
<div class="a" style="left:1197.5px;top:146px;width:1px;height:5px;background:#555"></div>
<div class="a" style="left:1210.7px;top:148px;width:1px;height:1px;background:#555"></div>
<div class="t" style="left:1214.4px;top:142px;width:20px;text-align:center;font-size:10.5px;line-height:13px;color:#5f5a57">18</div>
<div class="a" style="left:1237.1px;top:148px;width:1px;height:1px;background:#555"></div>
<div class="a" style="left:1250.2px;top:146px;width:1px;height:5px;background:#555"></div>
<div class="a" style="left:405.9px;top:155px;width:1px;height:3px;background:#666"></div>
<div class="a" style="left:471.9px;top:155px;width:1px;height:3px;background:#666"></div>
<div class="a" style="left:537.8px;top:155px;width:1px;height:3px;background:#666"></div>
<div class="a" style="left:603.8px;top:155px;width:1px;height:3px;background:#666"></div>
<div class="a" style="left:669.7px;top:155px;width:1px;height:3px;background:#666"></div>
<div class="a" style="left:735.7px;top:155px;width:1px;height:3px;background:#666"></div>
<div class="a" style="left:801.6px;top:155px;width:1px;height:3px;background:#666"></div>
<div class="a" style="left:867.6px;top:155px;width:1px;height:3px;background:#666"></div>
<div class="a" style="left:933.5px;top:155px;width:1px;height:3px;background:#666"></div>
<div class="a" style="left:999.5px;top:155px;width:1px;height:3px;background:#666"></div>
<div class="a" style="left:1065.4px;top:155px;width:1px;height:3px;background:#666"></div>
<svg class="a" style="left:335px;top:139px" width="11" height="22" viewBox="0 0 11 22"><path d="M0.5 0.5 H10.5 V2 L5.5 8.5 L0.5 2 Z" fill="#e9ebee" stroke="#80878f"/><path d="M5.5 8.5 L10.5 14.5 H0.5 Z" fill="#e9ebee" stroke="#80878f"/><rect x="0.5" y="14.5" width="10" height="6.5" fill="#e3e6ea" stroke="#80878f"/></svg>
<div class="a" style="left:358px;top:149px;width:2px;height:5px;background:#222"></div><div class="a" style="left:358px;top:152px;width:6px;height:2px;background:#222"></div>
<svg class="a" style="left:1092px;top:147px" width="12" height="9" viewBox="0 0 12 9"><path d="M1 8.5 V5 L6 0.5 L11 5 V8.5 Z" fill="#e3e6ea" stroke="#80878f"/></svg>
<div class="a" style="left:5px;top:161px;width:14px;height:545px;border:1px solid #9aa3ae;border-bottom:none;background:#f7f8fa"></div>
<div class="a" style="left:6px;top:161px;width:12px;height:46px;background:#c8cdd4;border-bottom:1px solid #9aa3ae"></div>
<div class="a" style="left:11px;top:165.0px;width:2px;height:1px;background:#444"></div>
<div class="a" style="left:10px;top:178.2px;width:5px;height:1px;background:#555"></div>
<div class="a" style="left:11px;top:191.4px;width:2px;height:1px;background:#444"></div>
<div class="a" style="left:11px;top:217.8px;width:2px;height:1px;background:#444"></div>
<div class="a" style="left:10px;top:231.0px;width:5px;height:1px;background:#555"></div>
<div class="a" style="left:11px;top:244.2px;width:2px;height:1px;background:#444"></div>
<div class="t" style="left:2px;top:251.7px;width:20px;height:14px;text-align:center;font-size:10.5px;line-height:14px;color:#5f5a57;transform:rotate(90deg)">1</div>
<div class="a" style="left:11px;top:270.6px;width:2px;height:1px;background:#444"></div>
<div class="a" style="left:10px;top:283.8px;width:5px;height:1px;background:#555"></div>
<div class="a" style="left:11px;top:296.9px;width:2px;height:1px;background:#444"></div>
<div class="t" style="left:2px;top:304.4px;width:20px;height:14px;text-align:center;font-size:10.5px;line-height:14px;color:#5f5a57;transform:rotate(90deg)">2</div>
<div class="a" style="left:11px;top:323.3px;width:2px;height:1px;background:#444"></div>
<div class="a" style="left:10px;top:336.5px;width:5px;height:1px;background:#555"></div>
<div class="a" style="left:11px;top:349.7px;width:2px;height:1px;background:#444"></div>
<div class="t" style="left:2px;top:357.2px;width:20px;height:14px;text-align:center;font-size:10.5px;line-height:14px;color:#5f5a57;transform:rotate(90deg)">3</div>
<div class="a" style="left:11px;top:376.1px;width:2px;height:1px;background:#444"></div>
<div class="a" style="left:10px;top:389.3px;width:5px;height:1px;background:#555"></div>
<div class="a" style="left:11px;top:402.5px;width:2px;height:1px;background:#444"></div>
<div class="t" style="left:2px;top:410.0px;width:20px;height:14px;text-align:center;font-size:10.5px;line-height:14px;color:#5f5a57;transform:rotate(90deg)">4</div>
<div class="a" style="left:11px;top:428.9px;width:2px;height:1px;background:#444"></div>
<div class="a" style="left:10px;top:442.1px;width:5px;height:1px;background:#555"></div>
<div class="a" style="left:11px;top:455.3px;width:2px;height:1px;background:#444"></div>
<div class="t" style="left:2px;top:462.8px;width:20px;height:14px;text-align:center;font-size:10.5px;line-height:14px;color:#5f5a57;transform:rotate(90deg)">5</div>
<div class="a" style="left:11px;top:481.6px;width:2px;height:1px;background:#444"></div>
<div class="a" style="left:10px;top:494.8px;width:5px;height:1px;background:#555"></div>
<div class="a" style="left:11px;top:508.0px;width:2px;height:1px;background:#444"></div>
<div class="t" style="left:2px;top:515.5px;width:20px;height:14px;text-align:center;font-size:10.5px;line-height:14px;color:#5f5a57;transform:rotate(90deg)">6</div>
<div class="a" style="left:11px;top:534.4px;width:2px;height:1px;background:#444"></div>
<div class="a" style="left:10px;top:547.6px;width:5px;height:1px;background:#555"></div>
<div class="a" style="left:11px;top:560.8px;width:2px;height:1px;background:#444"></div>
<div class="t" style="left:2px;top:568.3px;width:20px;height:14px;text-align:center;font-size:10.5px;line-height:14px;color:#5f5a57;transform:rotate(90deg)">7</div>
<div class="a" style="left:11px;top:587.2px;width:2px;height:1px;background:#444"></div>
<div class="a" style="left:10px;top:600.4px;width:5px;height:1px;background:#555"></div>
<div class="a" style="left:11px;top:613.6px;width:2px;height:1px;background:#444"></div>
<div class="t" style="left:2px;top:621.1px;width:20px;height:14px;text-align:center;font-size:10.5px;line-height:14px;color:#5f5a57;transform:rotate(90deg)">8</div>
<div class="a" style="left:11px;top:640.0px;width:2px;height:1px;background:#444"></div>
<div class="a" style="left:10px;top:653.1px;width:5px;height:1px;background:#555"></div>
<div class="a" style="left:11px;top:666.3px;width:2px;height:1px;background:#444"></div>
<div class="t" style="left:2px;top:673.8px;width:20px;height:14px;text-align:center;font-size:10.5px;line-height:14px;color:#5f5a57;transform:rotate(90deg)">9</div>
<div class="a" style="left:11px;top:692.7px;width:2px;height:1px;background:#444"></div>
<div class="a" style="left:19px;top:161px;width:7px;height:545px;background:#d3d7dc"></div>
<!--RULER_END-->
<div class="a" style="left:104px;top:161px;width:13px;height:545px;background:linear-gradient(90deg,rgba(150,156,164,0),#b4b9c0 60%,#979ca4)"></div>
<div class="a" style="left:1256px;top:161px;width:13px;height:545px;background:linear-gradient(90deg,#979ca4,#b4b9c0 40%,rgba(150,156,164,0))"></div>
<div class="a" style="left:117px;top:161px;width:1139px;height:545px;background:#fff;overflow:hidden">
<!--PAGE_START-->
<div class="a" style="left:-117px;top:-161px;width:1366px;height:728px">
<svg class="a" style="left:0;top:0" width="1366" height="728"><g stroke="#000" stroke-width="1.2" fill="none"><line x1="355" y1="266.5" x2="327" y2="393"/><line x1="413.5" y1="266.5" x2="442.5" y2="393"/><line x1="354.5" y1="266.5" x2="413.5" y2="266.5"/><line x1="489" y1="275.5" x2="459.5" y2="393"/><line x1="547.5" y1="275.5" x2="576.5" y2="393"/><line x1="489" y1="275.5" x2="547.5" y2="275.5"/><line x1="623" y1="275.5" x2="593.5" y2="393"/><line x1="681.5" y1="275.5" x2="710.5" y2="393"/><line x1="623" y1="275.5" x2="681.5" y2="275.5"/><line x1="866" y1="275.5" x2="794.5" y2="393.5"/><line x1="1008" y1="275.5" x2="1079.5" y2="393.5"/></g></svg>
<div class="box" style="left:359px;top:225px;width:51px;height:51px"></div>
<div class="box" style="left:342px;top:326px;width:85px;height:48px"></div>
<div class="box" style="left:325px;top:393px;width:118px;height:51px"></div>
<div class="t serif" style="left:83.5px;width:600px;text-align:center;top:231.1px;font-size:23.5px;line-height:28px;">R</div>
<div class="t serif" style="left:81.5px;width:600px;text-align:center;top:332.8px;font-size:15.4px;line-height:18px;letter-spacing:0.4px">Hecho 1</div>
<div class="t serif" style="left:84.0px;width:600px;text-align:center;top:399.4px;font-size:19.2px;line-height:23px;letter-spacing:0.1px">Víctima 1</div>
<div class="box" style="left:493px;top:225px;width:51px;height:51px"></div>
<div class="box" style="left:476px;top:326px;width:85px;height:48px"></div>
<div class="box" style="left:459px;top:393px;width:118px;height:51px"></div>
<div class="t serif" style="left:217.5px;width:600px;text-align:center;top:231.1px;font-size:23.5px;line-height:28px;">R</div>
<div class="t serif" style="left:215.5px;width:600px;text-align:center;top:332.8px;font-size:15.4px;line-height:18px;letter-spacing:0.4px">Hecho 2</div>
<div class="t serif" style="left:218.0px;width:600px;text-align:center;top:399.4px;font-size:19.2px;line-height:23px;letter-spacing:0.1px">Víctima 2</div>
<div class="box" style="left:627px;top:225px;width:51px;height:51px"></div>
<div class="box" style="left:610px;top:326px;width:85px;height:48px"></div>
<div class="box" style="left:593px;top:393px;width:118px;height:51px"></div>
<div class="t serif" style="left:351.5px;width:600px;text-align:center;top:231.1px;font-size:23.5px;line-height:28px;">R</div>
<div class="t serif" style="left:349.5px;width:600px;text-align:center;top:332.8px;font-size:15.4px;line-height:18px;letter-spacing:0.4px">Hecho 3</div>
<div class="t serif" style="left:352.0px;width:600px;text-align:center;top:399.4px;font-size:19.2px;line-height:23px;letter-spacing:0.1px">Víctima 3</div>
<div class="box" style="left:861px;top:225px;width:152px;height:51px"></div>
<div class="t serif" style="left:637.5px;width:600px;text-align:center;top:231.1px;font-size:23.5px;line-height:28px;letter-spacing:0.6px">MR</div>
<div class="box" style="left:794px;top:393px;width:286px;height:51px"></div>
<div class="box" style="left:811px;top:306px;width:252px;height:88px"></div>
<div class="t serif" style="left:636.5px;width:600px;text-align:center;top:313.1px;font-size:15.4px;line-height:17px;letter-spacing:0.12px">Hechos 1, 2…… sobre los cuales se</div>
<div class="t serif" style="left:636.5px;width:600px;text-align:center;top:330.4px;font-size:15.4px;line-height:17px;letter-spacing:0.12px">construye un macroproceso por</div>
<div class="t serif" style="left:636.5px;width:600px;text-align:center;top:347.7px;font-size:15.4px;line-height:17px;letter-spacing:0.12px">criterios de representatividad y</div>
<div class="t serif" style="left:636.5px;width:600px;text-align:center;top:365.0px;font-size:15.4px;line-height:17px;letter-spacing:0.12px">gravedad</div>
<div class="t serif" style="left:809.5px;top:398.8px;font-size:19.2px;line-height:23px;">Víctimas….</div>
<div class="box" style="left:359px;top:464px;width:319px;height:80px"></div>
<div class="t serif" style="left:218.0px;width:600px;text-align:center;top:471.8px;font-size:18.67px;line-height:21px;letter-spacing:0.1px">Estrategia ordinaria de investigación y</div>
<div class="t serif" style="left:218.0px;width:600px;text-align:center;top:492.3px;font-size:19.2px;line-height:21px;">juzgamiento</div>
<div class="box" style="left:794px;top:460px;width:269px;height:84px"></div>
<div class="t serif" style="left:628.0px;width:600px;text-align:center;top:467.0px;font-size:19.2px;line-height:21px;letter-spacing:0.12px">Estrategia de investigación y</div>
<div class="t serif" style="left:628.0px;width:600px;text-align:center;top:487.7px;font-size:19.2px;line-height:21px;letter-spacing:0.12px">juzgamiento planteada en el</div>
<div class="t serif" style="left:628.0px;width:600px;text-align:center;top:508.4px;font-size:19.2px;line-height:21px;letter-spacing:0.12px">Marco Jurídico para la Paz</div>
<div class="a serif" style="left:341px;top:565.6px;width:757px;font-size:26px;line-height:30px;text-align:justify;text-align-last:justify;white-space:nowrap">La ponencia para primer debate en la Cámara de Representantes</div>
<div class="a serif" style="left:341px;top:595.6px;width:757px;font-size:26px;line-height:30px;text-align:justify;text-align-last:justify;white-space:nowrap">evidencia precisamente que la expedición del Acto legislativo 01 de</div>
<div class="a serif" style="left:341px;top:625.6px;width:757px;font-size:26px;line-height:30px;text-align:justify;text-align-last:justify;white-space:nowrap">2012 se motivó en los problemas que se han presentado en la</div>
<div class="a serif" style="left:341px;top:655.6px;width:757px;font-size:26px;line-height:30px;text-align:justify;text-align-last:justify;white-space:nowrap">investigación <i>“caso a caso”</i> en los procesos de Justicia y Paz, en los</div>
<div class="a serif" style="left:341px;top:685.6px;width:757px;font-size:26px;line-height:30px;text-align:justify;text-align-last:justify;white-space:nowrap">cuales solamente se habían proferido cuatro (4) sentencias de un total de</div>
<div class="a" style="left:745px;top:686px;width:1px;height:20px;background:#000"></div>
</div>
<!--PAGE_END-->
</div>

<!--SCROLL_START-->
<div class="a" style="left:1349px;top:137px;width:17px;height:569px;background:#dce0e8"></div>
<div class="a" style="left:1351px;top:138px;width:12px;height:2px;background:#6f7782"></div>
<div class="a" style="left:1349px;top:143px;width:16px;height:17px;border:1px solid #8d96a2;border-radius:2px;background:linear-gradient(#f7f8fa,#dfe3e9)"></div>
<svg class="a" style="left:1351px;top:145px" width="12" height="13"><rect x="0.5" y="0.5" width="6" height="6" fill="#f2eef2" stroke="#555"/><rect x="4.5" y="5.5" width="7" height="7" fill="#fff" stroke="#555"/></svg>
<div class="a" style="left:1349px;top:161px;width:16px;height:16px;border:1px solid #8d96a2;border-radius:2px;background:linear-gradient(#f7f8fa,#dfe3e9)"></div>
<div class="a" style="left:1353px;top:166px;width:0;height:0;border-left:4px solid transparent;border-right:4px solid transparent;border-bottom:5px solid #3b3f45"></div>
<div class="a" style="left:1349px;top:562px;width:16px;height:17px;border:1px solid #8d96a2;border-radius:2px;background:linear-gradient(90deg,#f7f8fa,#e6e9ee)"></div>
<div class="a" style="left:1353px;top:567px;width:8px;height:1px;background:#777;box-shadow:0 2px 0 #777,0 4px 0 #777,0 6px 0 #777"></div>
<div class="a" style="left:1349px;top:638px;width:16px;height:16px;border:1px solid #8d96a2;border-radius:2px;background:linear-gradient(#f7f8fa,#dfe3e9)"></div>
<div class="a" style="left:1353px;top:643px;width:0;height:0;border-left:4.5px solid transparent;border-right:4.5px solid transparent;border-top:6px solid #3b3f45"></div>
<svg class="a" style="left:1352px;top:658px" width="10" height="9"><path d="M5 0.5 L9 4 H1 Z M5 4 L9 7.5 H1 Z" fill="#3b3f45"/></svg>
<div class="a" style="left:1353px;top:675px;width:8px;height:8px;border-radius:50%;border:1px solid #6b727c;background:#e1e4e9"></div>
<svg class="a" style="left:1352px;top:692px" width="10" height="9"><path d="M1 1 H9 L5 4.5 Z M1 4.5 H9 L5 8 Z" fill="#3b3f45"/></svg>
<!--SCROLL_END-->
<!-- STATUS -->
<div class="a" style="left:0;top:706px;width:1366px;height:22px;background:linear-gradient(#f3f5f8,#dfe3e9 50%,#d2d7de);border-top:1px solid #a9b1bb"></div>
<!--STATUS_START-->
<div class="t" style="left:9px;top:710px;font-size:10.9px;color:#2d3a4c">Sección: 1</div>
<div class="t" style="left:75px;top:710px;font-size:10.9px;color:#2d3a4c">Página: 294 de 340</div>
<div class="a" style="left:181px;top:709px;width:1px;height:17px;background:#b3bac4"></div>
<div class="a" style="left:182px;top:709px;width:1px;height:17px;background:#f4f6f8"></div>
<div class="t" style="left:190px;top:710px;font-size:10.9px;color:#2d3a4c">Palabras: 115.511</div>
<div class="a" style="left:287px;top:709px;width:1px;height:17px;background:#b3bac4"></div>
<div class="a" style="left:288px;top:709px;width:1px;height:17px;background:#f4f6f8"></div>
<svg class="a" style="left:295px;top:708px" width="19" height="17" viewBox="0 0 19 17"><path d="M1 10 L9 6 L17 10 L9 14 Z" fill="#dfe7f2" stroke="#4b6a96"/><path d="M1 10 V12 L9 16 L17 12 V10" fill="#9db4d6" stroke="#4b6a96"/><path d="M9 1 L16 8 M16 1 L9 8" stroke="#e02a1a" stroke-width="2"/></svg>
<div class="t" style="left:329px;top:710px;font-size:10.9px;color:#2d3a4c">Español (Costa Rica)</div>
<div class="a" style="left:489px;top:709px;width:1px;height:17px;background:#b3bac4"></div>
<svg class="a" style="left:498px;top:710px" width="15" height="13" viewBox="0 0 15 13"><rect x="0.5" y="0.5" width="14" height="12" fill="#fff" stroke="#5d7ba8"/><rect x="1" y="1" width="13" height="3" fill="#4f7fc6"/><path d="M3 6.5 H12 M3 9 H12" stroke="#6b8fc4"/><circle cx="2.5" cy="2.5" r="1.6" fill="#e23b2a"/></svg>
<div class="a" style="left:523px;top:709px;width:1px;height:17px;background:#b3bac4"></div>
<div class="a" style="left:1088px;top:709px;width:1px;height:17px;background:#b3bac4"></div>
<div class="a" style="left:1093px;top:708px;width:19px;height:19px;border:1px solid #c9a243;border-radius:2px;background:linear-gradient(#fde9a4,#fbd46e 50%,#f8c649)"></div>
<svg class="a" style="left:1096px;top:710px" width="13" height="14"><rect x="0.5" y="0.5" width="12" height="13" fill="#fff" stroke="#4b4b4b"/><path d="M2.5 3.5 H10.5 M2.5 6.5 H10.5 M2.5 9.5 H10.5" stroke="#555"/></svg>
<svg class="a" style="left:1115px;top:711px" width="16" height="13"><path d="M1 1.5 Q4 0.5 7.5 2 V12 Q4 10.5 1 11.5 Z M14.5 1.5 Q11 0.5 7.5 2 V12 Q11 10.5 14.5 11.5 Z" fill="#fff" stroke="#4b4b4b"/><path d="M3 4 H6 M3 6 H6 M3 8 H6 M9 4 H12.5 M9 6 H12.5 M9 8 H12.5" stroke="#777"/></svg>
<svg class="a" style="left:1135px;top:710px" width="16" height="15"><rect x="0.5" y="1.5" width="11" height="10" fill="#fff" stroke="#4b4b4b"/><path d="M2 4 H10 M2 6 H10 M2 8 H7" stroke="#666"/><circle cx="12" cy="11" r="3.5" fill="#3f8ad1" stroke="#2a5f98"/><path d="M10 10 Q12 9 14 12" stroke="#5bb65b" stroke-width="1.5" fill="none"/></svg>
<svg class="a" style="left:1154px;top:711px" width="14" height="13"><g stroke="#555"><path d="M1 1.5 H13 M4 4.5 H13 M7 7.5 H13 M4 10.5 H13"/></g><g stroke="#555" stroke-dasharray="1 1"><path d="M1 4.5 H3 M1 7.5 H6"/></g></svg>
<svg class="a" style="left:1172px;top:711px" width="13" height="13"><g stroke="#444" stroke-width="1.2"><path d="M0 1.5 H12 M0 4.5 H12 M0 7.5 H12 M0 10.5 H12"/></g></svg>
<div class="t" style="left:1194px;top:710px;font-size:11.2px;color:#2d3a4c">140%</div>
<div class="a" style="left:1230px;top:709px;width:16px;height:16px;border-radius:50%;border:1px solid #808892;background:radial-gradient(circle at 50% 30%,#fff,#e4e8ee)"></div>
<div class="a" style="left:1234px;top:716px;width:8px;height:2px;background:#333"></div>
<div class="a" style="left:1246px;top:717px;width:100px;height:1px;background:#9aa1aa"></div>
<div class="a" style="left:1246px;top:718px;width:100px;height:1px;background:#f6f7f9"></div>
<div class="a" style="left:1296px;top:713px;width:1px;height:9px;background:#9aa1aa"></div>
<svg class="a" style="left:1295px;top:709px" width="13" height="17"><path d="M1.5 1.5 H11.5 V10 L6.5 15.5 L1.5 10 Z" fill="#f5f6f8" stroke="#6b737d"/></svg>
<div class="a" style="left:1346px;top:709px;width:16px;height:16px;border-radius:50%;border:1px solid #808892;background:radial-gradient(circle at 50% 30%,#fff,#e4e8ee)"></div>
<div class="a" style="left:1350px;top:716px;width:8px;height:2px;background:#333"></div>
<div class="a" style="left:1353px;top:713px;width:2px;height:8px;background:#333"></div>
<!--STATUS_END-->
</body></html>
